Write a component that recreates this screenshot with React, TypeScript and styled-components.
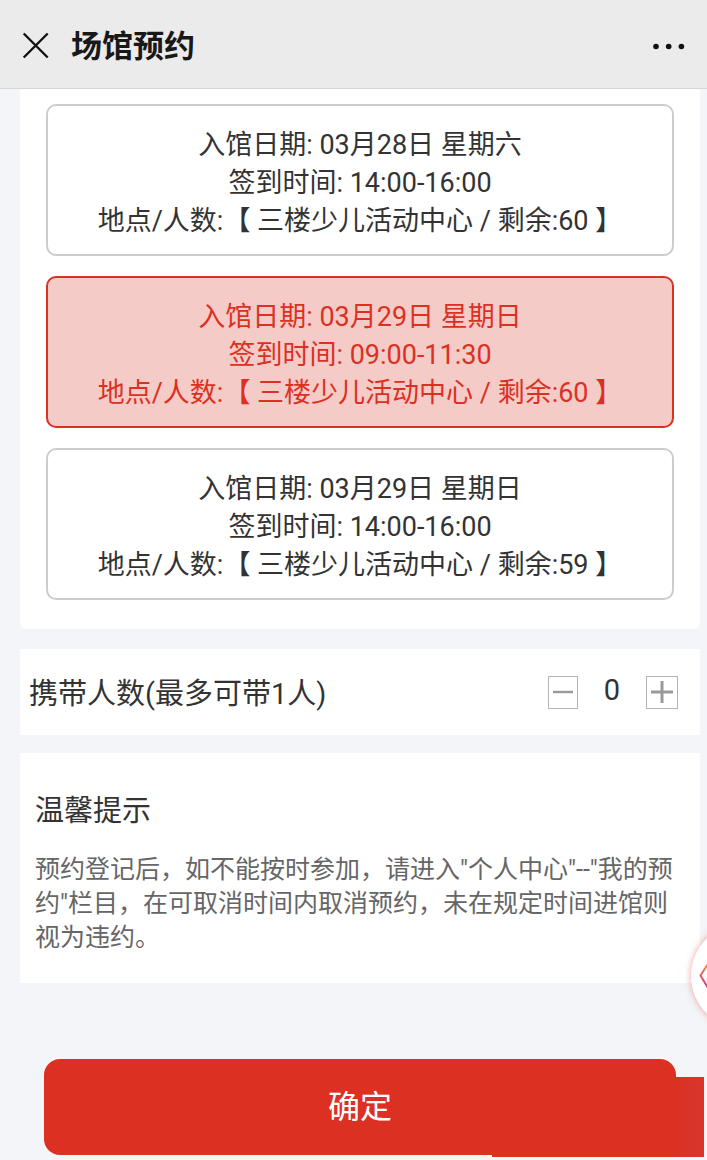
import React, { useState } from "react";
import styled, { createGlobalStyle } from "styled-components";

const RED = "#dc3023";

const GlobalStyle = createGlobalStyle`
  * { box-sizing: border-box; }
  body {
    margin: 0;
    background: #f3f5f9;
    color: #333;
    font-family: Roboto, "Noto Sans CJK SC", sans-serif;
    overflow-x: hidden;
  }
  button { font-family: inherit; cursor: pointer; }
`;

const Page = styled.div`
  display: flex;
  flex-direction: column;
`;

const Header = styled.header`
  display: flex;
  align-items: center;
  height: 89px;
  padding: 3px 20px 0;
  background: #ebebeb;
  border-bottom: 1px solid #d6d6d8;
`;

const IconButton = styled.button`
  display: flex;
  padding: 0;
  border: 0;
  background: none;
  color: #111;
`;

const Title = styled.h1`
  flex: 1;
  margin: 0 0 0 19px;
  padding-top: 3px;
  font-size: 31px;
  line-height: 44px;
  font-weight: 700;
  color: #181818;
`;

const Main = styled.main`
  display: flex;
  flex-direction: column;
  padding: 0 7px 0 20px;
`;

const SlotPanel = styled.fieldset`
  display: flex;
  flex-direction: column;
  gap: 20px;
  min-width: 0;
  margin: 0;
  padding: 15px 26px 29px;
  border: 0;
  border-radius: 0 0 6px 6px;
  background: #fff;
`;

const SlotCard = styled.label<{ $selected: boolean }>`
  display: flex;
  flex-direction: column;
  align-items: center;
  padding: 20px 16px 14px;
  border: 2px solid ${(p) => (p.$selected ? RED : "#ccc")};
  border-radius: 10px;
  background: ${(p) => (p.$selected ? "#f5cbc8" : "#fff")};
  color: ${(p) => (p.$selected ? RED : "#333")};
  font-size: 27px;
  line-height: 38px;
  text-align: center;
  cursor: pointer;
`;

const SlotRadio = styled.input`
  appearance: none;
  width: 0;
  height: 0;
  margin: 0;
`;

const GuestPanel = styled.section`
  display: flex;
  align-items: center;
  justify-content: space-between;
  min-height: 86px;
  margin-top: 20px;
  padding: 0 22px 0 9px;
  background: #fff;
`;

const GuestLabel = styled.label`
  padding-top: 3px;
  font-size: 29px;
  line-height: 40px;
`;

const Stepper = styled.div`
  display: flex;
  align-items: center;
`;

const StepButton = styled.button<{ $width: number }>`
  display: flex;
  align-items: center;
  justify-content: center;
  width: ${(p) => p.$width}px;
  height: 33px;
  padding: 0;
  border: 1px solid #b4b4b4;
  background: #fff;
  color: #999;
`;

const Count = styled.input`
  width: 68px;
  height: 36px;
  padding: 0 0 4px;
  border: 0;
  background: none;
  color: #333;
  font-family: inherit;
  font-size: 29px;
  text-align: center;
`;

const TipsPanel = styled.section`
  margin-top: 18px;
  padding: 38px 15px 28px;
  background: #fff;
`;

const TipsTitle = styled.h2`
  margin: 0 0 22px;
  font-size: 29px;
  line-height: 40px;
  font-weight: 400;
`;

const TipsText = styled.p`
  margin: 0;
  color: #666;
  font-size: 25px;
  line-height: 34px;
`;

const Footer = styled.footer`
  position: relative;
  margin: 76px 24px 5px;
`;

const SubmitButton = styled.button`
  position: relative;
  display: block;
  width: 100%;
  height: 96px;
  padding: 0 0 6px;
  border: 0;
  border-radius: 16px;
  background: ${RED};
  color: #fff;
  font-size: 32px;
`;

const CornerBlock = styled.div`
  position: absolute;
  top: 18px;
  right: -28px;
  bottom: -2px;
  width: 212px;
  background: linear-gradient(to right, ${RED} 84%, #d9352d);
`;

const FloatingButton = styled.button`
  position: fixed;
  top: 923px;
  right: -90px;
  display: flex;
  align-items: center;
  width: 106px;
  height: 106px;
  padding: 0 0 0 8px;
  border: 0;
  border-radius: 50%;
  background: #fff;
  box-shadow: 0 0 7px rgba(225, 90, 75, 0.55);
`;

const slots = [
  { date: "03月28日 星期六", time: "14:00-16:00", left: 60 },
  { date: "03月29日 星期日", time: "09:00-11:30", left: 60 },
  { date: "03月29日 星期日", time: "14:00-16:00", left: 59 },
];

export default function App() {
  const [selected, setSelected] = useState(1);
  const [guests, setGuests] = useState(0);

  return (
    <Page>
      <GlobalStyle />
      <Header>
        <IconButton aria-label="关闭">
          <svg width="32" height="32" viewBox="0 0 32 32" fill="none" stroke="currentColor" strokeWidth="2.4">
            <path d="M3.700 3.500 27.700 27.500M27.700 3.500 3.700 27.500" />
          </svg>
        </IconButton>
        <Title>场馆预约</Title>
        <IconButton aria-label="更多">
          <svg width="36" height="8" viewBox="0 0 36 8" fill="currentColor">
            <circle cx="5" cy="4.500" r="2.8" />
            <circle cx="17.700" cy="4.500" r="2.8" />
            <circle cx="30.400" cy="4.500" r="2.8" />
          </svg>
        </IconButton>
      </Header>
      <Main>
        <SlotPanel aria-label="预约时段">
          {slots.map((slot, i) => (
            <SlotCard key={i} $selected={selected === i}>
              <SlotRadio type="radio" name="slot" checked={selected === i} onChange={() => setSelected(i)} />
              <span>入馆日期: {slot.date}</span>
              <span>签到时间: {slot.time}</span>
              <span>地点/人数:【 三楼少儿活动中心 / 剩余:{slot.left} 】</span>
            </SlotCard>
          ))}
        </SlotPanel>
        <GuestPanel>
          <GuestLabel htmlFor="guests">携带人数(最多可带1人)</GuestLabel>
          <Stepper>
            <StepButton $width={30} aria-label="减少" onClick={() => setGuests(Math.max(0, guests - 1))}>
              <svg width="20" height="22" viewBox="0 0 20 22" stroke="currentColor" strokeWidth="2.4">
                <path d="M0 11h20" />
              </svg>
            </StepButton>
            <Count id="guests" type="text" inputMode="numeric" readOnly value={guests} />
            <StepButton $width={32} aria-label="增加" onClick={() => setGuests(Math.min(1, guests + 1))}>
              <svg width="22" height="22" viewBox="0 0 22 22" stroke="currentColor" strokeWidth="3">
                <path d="M0 11h22M11 0v22" />
              </svg>
            </StepButton>
          </Stepper>
        </GuestPanel>
        <TipsPanel>
          <TipsTitle>温馨提示</TipsTitle>
          <TipsText>
            预约登记后，如不能按时参加，请进入"个人中心"--"我的预约"栏目，在可取消时间内取消预约，未在规定时间进馆则视为违约。
          </TipsText>
        </TipsPanel>
        <Footer>
          <CornerBlock />
          <SubmitButton>确定</SubmitButton>
        </Footer>
      </Main>
      <FloatingButton aria-label="展开">
        <svg width="24" height="26" viewBox="0 0 24 26" fill="none" strokeWidth="2">
          <defs>
            <linearGradient id="hex" x1="0" y1="0" x2="0" y2="1">
              <stop offset="0" stopColor="#ef8a3c" />
              <stop offset="1" stopColor="#d5308c" />
            </linearGradient>
          </defs>
          <path d="M8.500 1.500 1.500 12.500 8.500 24h10" stroke="url(#hex)" />
        </svg>
      </FloatingButton>
    </Page>
  );
}
